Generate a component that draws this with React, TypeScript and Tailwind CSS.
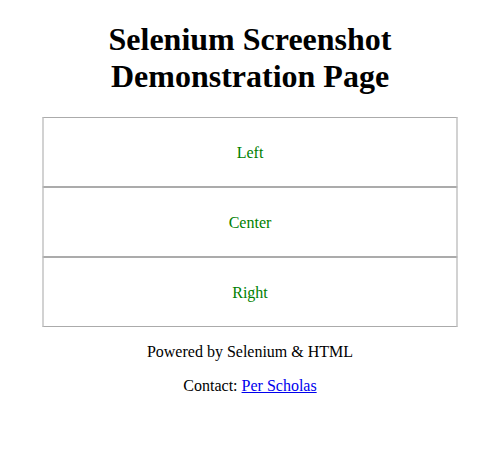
const boxes = ["Left", "Center", "Right"];

export default function App() {
  return (
    <div className="min-h-[468px] bg-white px-2 font-['Liberation_Serif','Times_New_Roman',serif] text-black">
      <h1 className="pt-[21px] pb-[22px] text-center text-[32px] font-bold leading-[37px]">
        Selenium Screenshot
        <br />
        Demonstration Page
      </h1>

      {/* Stacked cells */}
      <div className="mx-auto w-[416px]">
        {boxes.map((label) => (
          <div
            key={label}
            className="flex h-[70px] items-center justify-center border-x-2 border-y border-x-[#d2d2d2] border-y-[#ababab] pt-[2px] text-base text-[#008000]"
          >
            {label}
          </div>
        ))}
      </div>

      <p className="mt-4 text-center text-base leading-[18px]">Powered by Selenium &amp; HTML</p>
      <p className="mt-4 text-center text-base leading-[18px]">
        Contact:{" "}
        <a href="#" className="text-[#0000ee] underline">
          Per Scholas
        </a>
      </p>
    </div>
  );
}
